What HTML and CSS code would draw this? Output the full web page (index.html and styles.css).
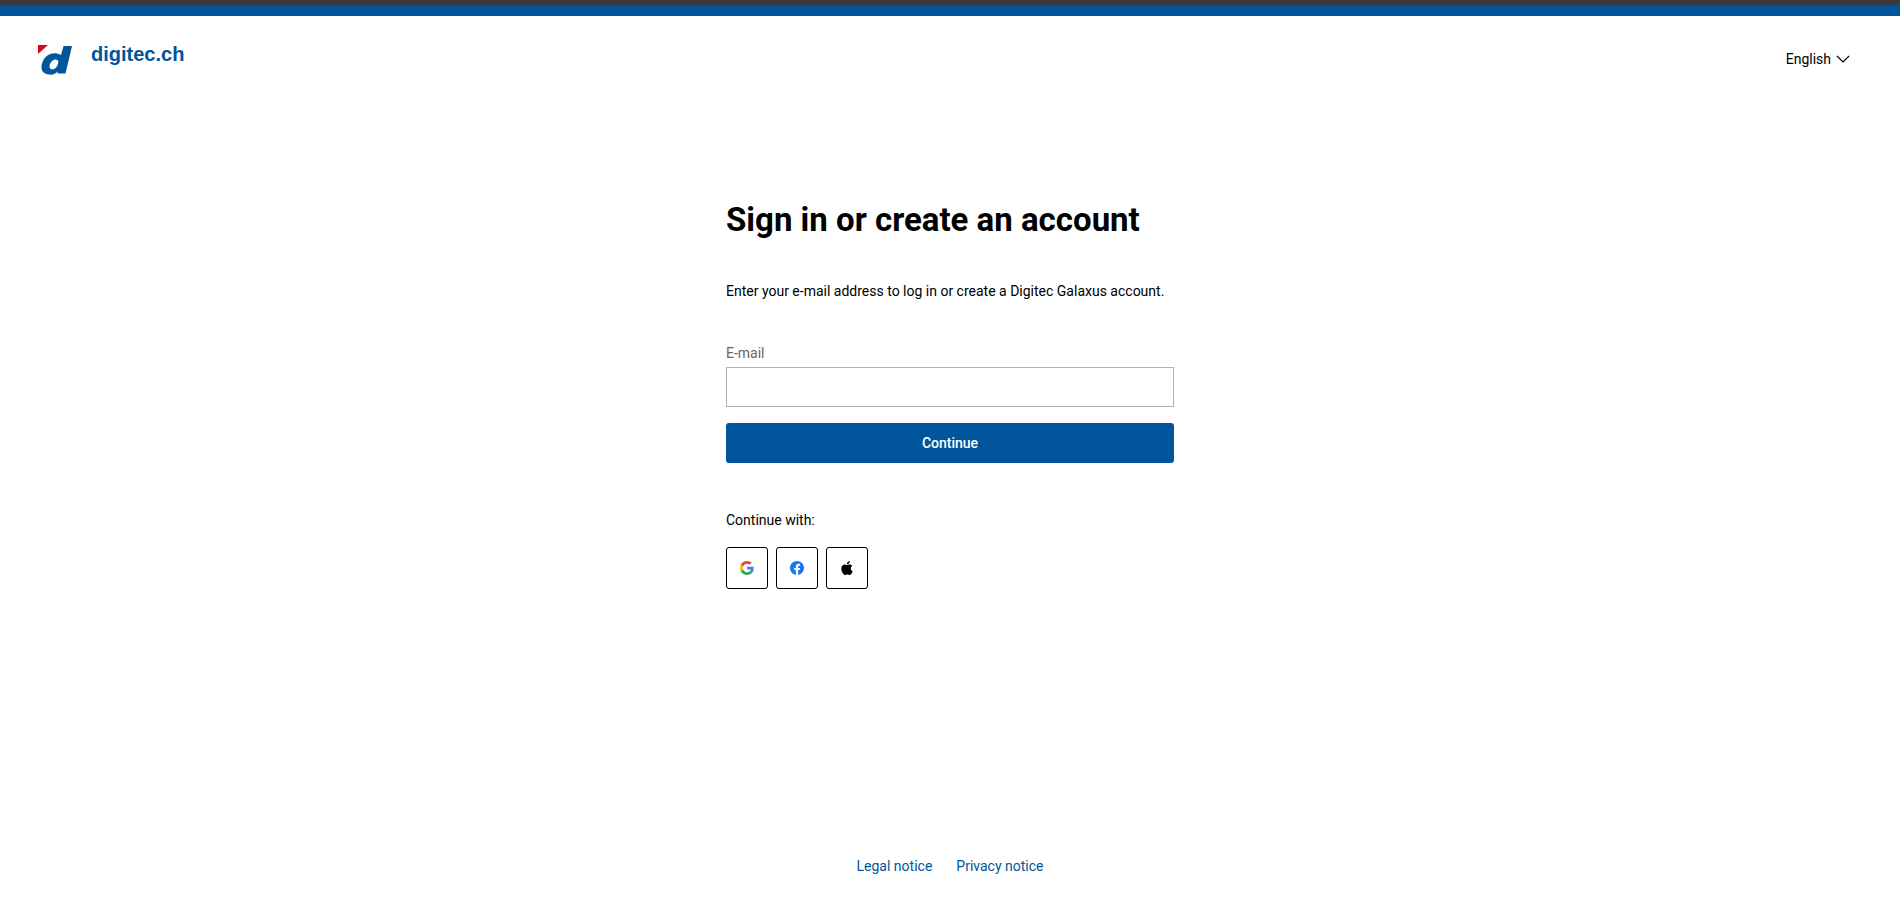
FILE: index.html
```html
<!DOCTYPE html>
<html lang="en">
<head>
<meta charset="utf-8">
<title>Sign in – digitec.ch</title>
<link rel="stylesheet" href="styles.css">
</head>
<body>
<div class="page">
  <header class="header">
    <a class="brand" href="#">
      <svg class="brand-mark" viewBox="0 0 36 32" aria-hidden="true">
        <path d="M0 1H10L0 10Z" fill="#e2001a"/>
        <path d="M25.500 2H34L27.500 29.500H19.500L20 27.500C17.500 30 14.500 31 11 30.500C4 30 2 24.500 4.500 18C7.500 10.500 16 7 23 11ZM20.500 17.500C18.500 14 14 15.500 12 20C10.500 24 13 26.500 16 25C18.500 24 20 21 20.500 17.500Z" fill="#00559d" fill-rule="evenodd"/>
      </svg>
      <span class="brand-name">digitec.ch</span>
    </a>
    <button class="language" type="button">
      English
      <svg class="chevron" viewBox="0 0 14 8" aria-hidden="true"><path d="M1 1L7 7L13 1" fill="none" stroke="currentColor" stroke-width="1.200"/></svg>
    </button>
  </header>
  <main class="signin">
    <h1 class="title">Sign in or create an account</h1>
    <p class="intro">Enter your e-mail address to log in or create a Digitec Galaxus account.</p>
    <form class="form">
      <label class="label" for="email">E-mail</label>
      <input class="input" id="email" type="email">
      <button class="submit" type="submit">Continue</button>
    </form>
    <p class="social-title">Continue with:</p>
    <div class="social">
      <button class="social-button" type="button" aria-label="Google">
        <svg class="social-icon" viewBox="0 0 48 48" aria-hidden="true">
          <path fill="#ea4335" d="M24 9.500c3.540 0 6.710 1.220 9.210 3.600l6.850-6.850C35.900 2.380 30.470 0 24 0 14.620 0 6.510 5.380 2.560 13.220l7.980 6.190C12.430 13.720 17.740 9.500 24 9.500z"/>
          <path fill="#4285f4" d="M46.980 24.550c0-1.570-.15-3.090-.38-4.550H24v9.020h12.940c-.58 2.960-2.260 5.480-4.780 7.180l7.730 6c4.510-4.180 7.090-10.360 7.090-17.650z"/>
          <path fill="#fbbc05" d="M10.530 28.590c-.48-1.450-.76-2.990-.76-4.590s.27-3.140.76-4.590l-7.980-6.190C.92 16.460 0 20.120 0 24s.92 7.540 2.560 10.780l7.970-6.190z"/>
          <path fill="#34a853" d="M24 48c6.480 0 11.930-2.130 15.890-5.810l-7.730-6c-2.150 1.450-4.920 2.300-8.160 2.300-6.260 0-11.570-4.220-13.470-9.910l-7.980 6.190C6.510 42.620 14.620 48 24 48z"/>
        </svg>
      </button>
      <button class="social-button" type="button" aria-label="Facebook">
        <svg class="social-icon" viewBox="0 0 24 24" aria-hidden="true"><path fill="#1877f2" d="M24 12.073c0-6.627-5.373-12-12-12s-12 5.373-12 12c0 5.990 4.388 10.954 10.125 11.854v-8.385H7.078v-3.470h3.047V9.430c0-3.007 1.792-4.669 4.533-4.669 1.312 0 2.686.235 2.686.235v2.953H15.830c-1.491 0-1.956.925-1.956 1.874v2.250h3.328l-.532 3.470h-2.796v8.385C19.612 23.027 24 18.062 24 12.073z"/></svg>
      </button>
      <button class="social-button" type="button" aria-label="Apple">
        <svg class="social-icon" viewBox="0 0 24 24" aria-hidden="true"><path d="M12.152 6.896c-.948 0-2.415-1.078-3.960-1.040-2.040.027-3.910 1.183-4.961 3.014-2.117 3.675-.546 9.103 1.519 12.090 1.013 1.454 2.208 3.090 3.792 3.039 1.520-.065 2.090-.987 3.935-.987 1.831 0 2.350.987 3.960.948 1.637-.026 2.676-1.480 3.676-2.948 1.156-1.688 1.636-3.325 1.662-3.415-.039-.013-3.182-1.221-3.220-4.857-.026-3.040 2.480-4.494 2.597-4.559-1.429-2.090-3.623-2.324-4.390-2.376-2-.156-3.675 1.090-4.610 1.090zM15.530 3.830c.843-1.012 1.400-2.427 1.245-3.830-1.207.052-2.662.805-3.532 1.818-.780.896-1.454 2.338-1.273 3.714 1.338.104 2.715-.688 3.559-1.701"/></svg>
      </button>
    </div>
  </main>
  <footer class="footer">
    <a class="footer-link" href="#">Legal notice</a>
    <a class="footer-link" href="#">Privacy notice</a>
  </footer>
</div>
</body>
</html>
```
FILE: styles.css
```css
* { box-sizing: border-box; }

body {
  margin: 0;
  background: #fff;
  color: #000;
  font-family: Roboto, "Liberation Sans", sans-serif;
  font-size: 14px;
  line-height: 20px;
}

h1, p { margin: 0; }

button { font: inherit; cursor: pointer; }

a { text-decoration: none; }

.page {
  min-height: 100vh;
  display: flex;
  flex-direction: column;
  border-top: 6px solid #3b3a40;
}

.header {
  display: flex;
  justify-content: space-between;
  border-top: 10px solid #00559d;
  padding: 28px 50px 0 38px;
}

.brand {
  display: flex;
  gap: 17px;
  color: #00559d;
}

.brand-mark {
  width: 36px;
  height: 32px;
}

.brand-name {
  font-family: "Liberation Sans", Arial, sans-serif;
  font-size: 20px;
  font-weight: 700;
}

.language {
  align-self: flex-start;
  display: flex;
  align-items: center;
  gap: 5px;
  padding: 5px 0;
  border: 0;
  background: none;
  color: #000;
}

.chevron {
  width: 14px;
  height: 8px;
}

.signin {
  width: 100%;
  max-width: 448px;
  margin: 0 auto;
  padding-top: 124px;
  flex: 1;
}

.title {
  font-size: 33px;
  line-height: 40px;
  font-weight: 700;
}

.intro { margin-top: 41px; }

.form {
  display: flex;
  flex-direction: column;
  margin-top: 42px;
}

.label { color: #666; }

.input {
  height: 40px;
  margin-top: 4px;
  padding: 0 12px;
  border: 1px solid #b0b0b0;
  border-radius: 0;
  background: #fff;
  font: inherit;
}

.submit {
  height: 40px;
  margin-top: 16px;
  border: 0;
  border-radius: 3px;
  background: #00559d;
  color: #fff;
  font-weight: 500;
}

.social-title { margin-top: 47px; }

.social {
  display: flex;
  gap: 8px;
  margin-top: 17px;
}

.social-button {
  display: grid;
  place-items: center;
  width: 42px;
  height: 42px;
  padding: 0;
  border: 1px solid #000;
  border-radius: 3px;
  background: #fff;
}

.social-icon {
  width: 14px;
  height: 14px;
}

.footer {
  display: flex;
  justify-content: center;
  gap: 24px;
  padding: 24px 0 38px;
}

.footer-link { color: #00559d; }
```
